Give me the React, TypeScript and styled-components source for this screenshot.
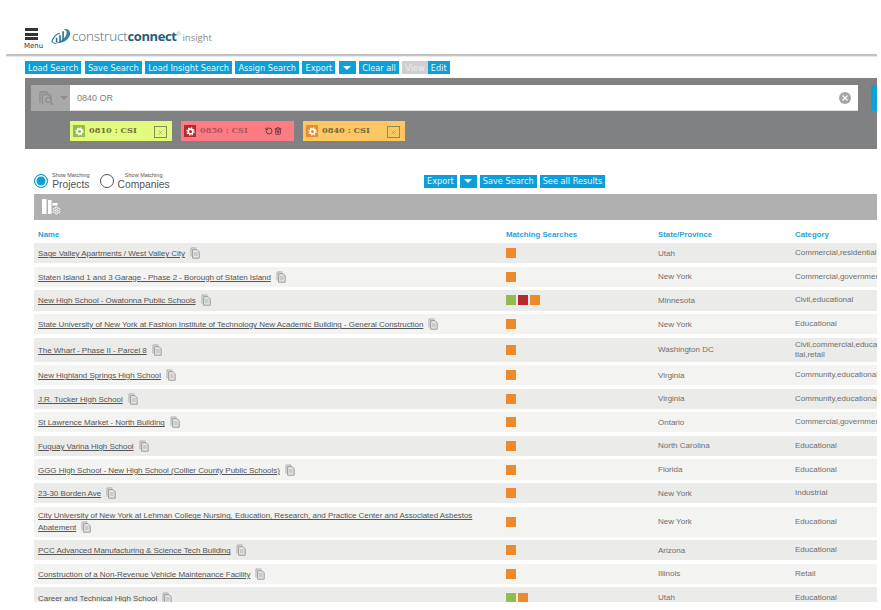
import React from 'react';
import styled, { createGlobalStyle } from 'styled-components';
import { RotateCcw, Settings, Trash2, X } from 'lucide-react';

const GlobalStyle = createGlobalStyle`
  html, body {
    margin: 0;
    padding: 0;
    background: #fff;
    overflow: hidden;
  }
  body {
    font-family: 'Liberation Sans', Arial, sans-serif;
  }
`;

type Project = {
  name: string;
  matches: string[];
  state: string;
  category: string;
};

const orange = '#ee8a2a';
const green = '#93bb4e';
const red = '#b9282f';

const projects: Project[] = [
  { name: 'Sage Valley Apartments / West Valley City', matches: [orange], state: 'Utah', category: 'Commercial,residential' },
  { name: 'Staten Island 1 and 3 Garage - Phase 2 - Borough of Staten Island', matches: [orange], state: 'New York', category: 'Commercial,government' },
  { name: 'New High School - Owatonna Public Schools', matches: [green, red, orange], state: 'Minnesota', category: 'Civil,educational' },
  { name: 'State University of New York at Fashion Institute of Technology New Academic Building - General Construction', matches: [orange], state: 'New York', category: 'Educational' },
  { name: 'The Wharf - Phase II - Parcel 8', matches: [orange], state: 'Washington DC', category: 'Civil,commercial,educational,residential,retail' },
  { name: 'New Highland Springs High School', matches: [orange], state: 'Virginia', category: 'Community,educational' },
  { name: 'J.R. Tucker High School', matches: [orange], state: 'Virginia', category: 'Community,educational' },
  { name: 'St Lawrence Market - North Building', matches: [orange], state: 'Ontario', category: 'Commercial,government' },
  { name: 'Fuquay Varina High School', matches: [orange], state: 'North Carolina', category: 'Educational' },
  { name: 'GGG High School - New High School (Collier County Public Schools)', matches: [orange], state: 'Florida', category: 'Educational' },
  { name: '23-30 Borden Ave', matches: [orange], state: 'New York', category: 'Industrial' },
  { name: 'City University of New York at Lehman College Nursing, Education, Research, and Practice Center and Associated Asbestos Abatement', matches: [orange], state: 'New York', category: 'Educational' },
  { name: 'PCC Advanced Manufacturing & Science Tech Building', matches: [orange], state: 'Arizona', category: 'Educational' },
  { name: 'Construction of a Non-Revenue Vehicle Maintenance Facility', matches: [orange], state: 'Illinois', category: 'Retail' },
  { name: 'Career and Technical High School', matches: [green, orange], state: 'Utah', category: 'Educational' },
];

const CopyIcon = () => (
  <CopyGlyph viewBox="0 0 10 12" aria-hidden="true">
    <path d="M1 9.5V1h5.5" fill="none" stroke="#a9a9a9" strokeWidth="1" />
    <path d="M2.6 2.6h4.4l2.2 2.2v6.4H2.6z" fill="#e2e2e2" stroke="#9d9d9d" strokeWidth="1" />
    <path d="M4 6h3.6M4 8h3.6" stroke="#a9a9a9" strokeWidth="0.8" />
  </CopyGlyph>
);

const Logo = () => (
  <svg width="20" height="17" viewBox="0 0 23 19" aria-hidden="true">
    <path d="M1 16C2 10 7 6 10 6" fill="none" stroke="#2d7ea6" strokeWidth="1.4" />
    <path d="M14 1c5-1 8 1 8 5 0 6-8 12-17 11 6-1 12-6 13-11 .4-2.500-1-4-4-5z" fill="#2c86ad" />
    <path d="M1 15c1 3 4 3.500 8 2.400-3 .1-5.500-.4-8-2.400z" fill="#1f6f94" />
    <path d="M5.500 11h1.800v5H5.500zM9.500 8h1.800v8H9.500zM13 3.500h1.800V14H13z" fill="#2c6f8f" />
  </svg>
);

const ChipGear = () => (
  <svg width="9" height="9" viewBox="0 0 10 10" aria-hidden="true">
    <circle cx="5" cy="5" r="2.600" fill="none" stroke="#fff" strokeWidth="1.800" />
    <circle cx="5" cy="5" r="4" fill="none" stroke="#fff" strokeWidth="1.400" strokeDasharray="1.570 1.570" />
  </svg>
);

const App = () => {
  return (
    <Page>
      <GlobalStyle />
      <Header>
        <MenuBlock>
          <MenuBars>
            <span />
            <span />
            <span />
          </MenuBars>
          <MenuLabel>Menu</MenuLabel>
        </MenuBlock>
        <Brand>
          <Logo />
          <BrandName>
            construct<strong>connect</strong>
            <sup>®</sup>
            <em>insight</em>
          </BrandName>
        </Brand>
      </Header>
      <Divider />

      <Toolbar>
        <Button>Load Search</Button>
        <Button>Save Search</Button>
        <Button>Load Insight Search</Button>
        <Button>Assign Search</Button>
        <Button>Export</Button>
        <CaretButton />
        <Button>Clear all</Button>
        <ViewEdit>
          <Button $muted>View</Button>
          <Button>Edit</Button>
        </ViewEdit>
      </Toolbar>

      <SearchPanel>
        <SearchRow>
          <SearchType>
            <svg width="17" height="17" viewBox="0 0 17 17" aria-hidden="true">
              <path d="M2 13V2h7v2" fill="none" stroke="#8e8e8e" strokeWidth="1.400" />
              <path d="M4.500 14.500V4.500h7l1.500 2v3" fill="none" stroke="#8e8e8e" strokeWidth="1.400" />
              <circle cx="10.500" cy="10" r="2.600" fill="none" stroke="#8e8e8e" strokeWidth="1.400" />
              <path d="M12.500 12l2.500 3" stroke="#8e8e8e" strokeWidth="1.600" />
            </svg>
            <DownTriangle $color="#8e8e8e" />
          </SearchType>
          <SearchField>
            <span>0840 OR</span>
            <ClearCircle>
              <X size={8} color="#fff" strokeWidth={4} />
            </ClearCircle>
          </SearchField>
          <SearchGo />
        </SearchRow>
        <Chips>
          <Chip $bg="#e2fb7c" $width={102}>
            <ChipBadge $bg={green}>
              <ChipGear />
            </ChipBadge>
            <ChipLabel $color="#6d7044">0810 : CSI</ChipLabel>
            <ChipClose>
              <X size={7} color="#777" strokeWidth={1.500} />
            </ChipClose>
          </Chip>
          <Chip $bg="#fd7b83" $width={113}>
            <ChipBadge $bg={red}>
              <ChipGear />
            </ChipBadge>
            <ChipLabel $color="#a9565b">0850 : CSI</ChipLabel>
            <ChipActions>
              <RotateCcw size={8} color="#6e3a3d" strokeWidth={3} />
              <Trash2 size={8} color="#6e3a3d" strokeWidth={3} />
            </ChipActions>
          </Chip>
          <Chip $bg="#fdc764" $width={102}>
            <ChipBadge $bg={orange}>
              <ChipGear />
            </ChipBadge>
            <ChipLabel $color="#77653a">0840 : CSI</ChipLabel>
            <ChipClose>
              <X size={7} color="#777" strokeWidth={1.500} />
            </ChipClose>
          </Chip>
        </Chips>
      </SearchPanel>

      <ResultsControls>
        <RadioGroup>
          <RadioOption>
            <Radio $checked />
            <RadioText>
              <small>Show Matching</small>
              <span>Projects</span>
            </RadioText>
          </RadioOption>
          <RadioOption>
            <Radio />
            <RadioText>
              <small>Show Matching</small>
              <span>Companies</span>
            </RadioText>
          </RadioOption>
        </RadioGroup>
        <ResultActions>
          <Button>Export</Button>
          <CaretButton />
          <Button>Save Search</Button>
          <Button>See all Results</Button>
        </ResultActions>
      </ResultsControls>

      <Results>
        <ColumnBar>
          <svg width="20" height="18" viewBox="0 0 20 18" aria-hidden="true">
            <path d="M0 1h4.500v15H0zM6 2h3.500v14H6zM10.500 5h5v2.500h-5z" fill="#fff" />
          </svg>
          <ColumnGear>
            <Settings size={9} color="#fff" strokeWidth={2.500} />
          </ColumnGear>
        </ColumnBar>
        <HeadRow>
          <span>Name</span>
          <span>Matching Searches</span>
          <span>State/Province</span>
          <span>Category</span>
        </HeadRow>
        <Rows>
          {projects.map((project, i) => (
            <Row key={project.name} $odd={i % 2 === 0}>
              <NameCell>
                <a href="#">{project.name}</a>
                <CopyIcon />
              </NameCell>
              <Swatches>
                {project.matches.map((color, j) => (
                  <Swatch key={j} $color={color} />
                ))}
              </Swatches>
              <TextCell>{project.state}</TextCell>
              <CategoryCell>{project.category}</CategoryCell>
            </Row>
          ))}
        </Rows>
      </Results>
    </Page>
  );
};

export default App;

const Page = styled.div`
  width: 877px;
  height: 602px;
  overflow: hidden;
  background: #fff;
`;

const Header = styled.header`
  display: flex;
  align-items: flex-end;
  gap: 8px;
  height: 54px;
  padding-left: 24px;
  box-sizing: border-box;
`;

const MenuBlock = styled.div`
  display: flex;
  flex-direction: column;
  align-items: flex-start;
  width: 19px;
  margin-bottom: 3px;
`;

const MenuBars = styled.div`
  display: flex;
  flex-direction: column;
  gap: 1.500px;
  width: 13px;
  margin-left: 1px;

  & span {
    display: block;
    height: 3px;
    background: #333;
  }
`;

const MenuLabel = styled.span`
  margin-top: 2px;
  font-family: 'DejaVu Sans', sans-serif;
  font-size: 7px;
  line-height: 9px;
  color: #333;
`;

const Brand = styled.div`
  display: flex;
  align-items: center;
  gap: 1px;
  margin-bottom: 9px;
`;

const BrandName = styled.div`
  font-family: 'Open Sans', sans-serif;
  font-size: 13.500px;
  font-weight: 300;
  color: #4d6b7c;
  letter-spacing: -0.2px;
  white-space: nowrap;

  & strong {
    font-size: 13px;
    font-weight: 700;
    letter-spacing: -0.4px;
    color: #2c5b75;
  }

  & sup {
    font-size: 5px;
    color: #666;
  }

  & em {
    margin-left: 2px;
    font-size: 9.500px;
    font-style: normal;
    font-weight: 400;
    letter-spacing: 0;
    color: #8a8a8a;
  }
`;

const Divider = styled.div`
  height: 2px;
  margin-left: 6px;
  background: #c4c4c4;
  box-shadow: 0 1px 1px #e8e8e8;
`;

const Toolbar = styled.div`
  display: flex;
  gap: 3.500px;
  margin: 5px 0 4px 25px;
  height: 13px;
`;

const Button = styled.button<{ $muted?: boolean }>`
  display: flex;
  align-items: center;
  justify-content: center;
  height: 13px;
  padding: 0 3px;
  border: 0;
  border-radius: 0;
  background: ${(p) => (p.$muted ? '#cfcfcf' : '#0d9fd8')};
  color: ${(p) => (p.$muted ? '#eee' : '#e6f6fc')};
  font-family: 'DejaVu Sans', sans-serif;
  font-size: 8.200px;
  white-space: nowrap;
`;

const CaretBox = styled(Button)`
  width: 17px;
  padding: 0;
`;

const DownTriangle = styled.i<{ $color: string }>`
  display: block;
  width: 0;
  height: 0;
  border-left: 4px solid transparent;
  border-right: 4px solid transparent;
  border-top: 4px solid ${(p) => p.$color};
`;

const CaretButton = () => (
  <CaretBox aria-label="More">
    <DownTriangle $color="#fff" />
  </CaretBox>
);

const ViewEdit = styled.div`
  display: flex;
  gap: 0;
`;

const SearchPanel = styled.section`
  display: flex;
  flex-direction: column;
  height: 71px;
  margin-left: 25px;
  padding: 7px 0 0 6px;
  box-sizing: border-box;
  background: #7f8182;
`;

const SearchRow = styled.div`
  display: flex;
  height: 26px;
`;

const SearchType = styled.div`
  display: flex;
  align-items: center;
  gap: 5px;
  width: 39px;
  padding-left: 7px;
  box-sizing: border-box;
  background: #a9a9a9;
`;

const SearchField = styled.div`
  display: flex;
  align-items: center;
  justify-content: space-between;
  width: 790px;
  padding: 0 7px 0 7px;
  box-sizing: border-box;
  background: #fff;
  border-bottom: 1px solid #ddd;
  font-size: 9px;
  color: #808080;
`;

const ClearCircle = styled.span`
  display: flex;
  align-items: center;
  justify-content: center;
  width: 12px;
  height: 12px;
  border-radius: 50%;
  background: #a5a5a5;
`;

const SearchGo = styled.div`
  width: 6px;
  margin-left: 13px;
  background: #0d9fd8;
`;

const Chips = styled.div`
  display: flex;
  gap: 9px;
  margin: 10px 0 0 39px;
`;

const Chip = styled.div<{ $bg: string; $width: number }>`
  display: flex;
  align-items: center;
  width: ${(p) => p.$width}px;
  height: 20px;
  padding: 0 5px 0 3px;
  box-sizing: border-box;
  background: ${(p) => p.$bg};
`;

const ChipBadge = styled.span<{ $bg: string }>`
  display: flex;
  align-items: center;
  justify-content: center;
  flex: none;
  width: 12px;
  height: 12px;
  background: ${(p) => p.$bg};
`;

const ChipLabel = styled.span<{ $color: string }>`
  margin: -2px 0 0 4px;
  font-family: 'DejaVu Serif', serif;
  font-size: 8.200px;
  font-weight: 700;
  color: ${(p) => p.$color};
  white-space: nowrap;
`;

const ChipClose = styled.span`
  display: flex;
  align-items: center;
  justify-content: center;
  width: 11px;
  height: 10px;
  margin-left: auto;
  margin-top: 2px;
  border: 1px solid #8a8a60;
  box-sizing: content-box;
`;

const ChipActions = styled.span`
  display: flex;
  gap: 1px;
  margin-left: auto;
  margin-right: 7px;
`;

const ResultsControls = styled.div`
  display: flex;
  align-items: center;
  height: 42px;
  margin-left: 34px;
  padding-top: 22px;
  box-sizing: border-box;
`;

const RadioGroup = styled.div`
  display: flex;
  gap: 10px;
  width: 390px;
`;

const RadioOption = styled.label`
  display: flex;
  align-items: center;
  gap: 4px;
`;

const Radio = styled.span<{ $checked?: boolean }>`
  display: block;
  width: 12px;
  height: 12px;
  border-radius: 50%;
  border: 1px solid ${(p) => (p.$checked ? '#0d9fd8' : '#555')};
  background: ${(p) => (p.$checked ? '#0d9fd8' : '#fff')};
  box-shadow: ${(p) => (p.$checked ? 'inset 0 0 0 1.500px #fff' : 'none')};
`;

const RadioText = styled.span`
  display: flex;
  flex-direction: column;
  align-items: center;
  color: #555;

  & small {
    font-size: 5.500px;
    line-height: 7px;
  }

  & span {
    font-size: 10.300px;
    line-height: 12px;
  }
`;

const ResultActions = styled.div`
  display: flex;
  gap: 3px;
`;

const Results = styled.section`
  margin: 3px 0 0 34px;
`;

const ColumnBar = styled.div`
  display: flex;
  align-items: center;
  position: relative;
  height: 26px;
  padding-left: 8px;
  background: #b0b0b0;
  box-sizing: border-box;
`;

const ColumnGear = styled.span`
  position: absolute;
  left: 18px;
  top: 12px;
  display: flex;
`;

const tableColumns = '472px 152px 137px 132px';

const HeadRow = styled.div`
  display: grid;
  grid-template-columns: ${tableColumns};
  align-items: center;
  height: 23px;
  padding-top: 5px;
  box-sizing: border-box;
  font-size: 7.800px;
  font-weight: 700;
  color: #29a3d6;

  & span:first-child {
    padding-left: 4px;
  }
`;

const Rows = styled.div`
  display: flex;
  flex-direction: column;
  gap: 3.350px;
`;

const Row = styled.div<{ $odd: boolean }>`
  display: grid;
  grid-template-columns: ${tableColumns};
  align-items: center;
  min-height: 20.300px;
  background: ${(p) => (p.$odd ? '#ebebea' : '#f3f3f2')};
  font-size: 8px;
  color: #6f6f6f;
`;

const NameCell = styled.div`
  padding: 3.500px 30px 3.500px 4px;
  line-height: 11px;
  letter-spacing: -0.05px;
  color: #555;

  & a {
    color: #555;
    text-decoration: underline;
  }
`;

const CopyGlyph = styled.svg`
  display: inline-block;
  width: 10px;
  height: 12px;
  margin-left: 5px;
  vertical-align: -3px;
`;

const Swatches = styled.div`
  display: flex;
  gap: 2px;
`;

const Swatch = styled.span<{ $color: string }>`
  display: block;
  width: 10px;
  height: 10px;
  background: ${(p) => p.$color};
`;

const TextCell = styled.div``;

const CategoryCell = styled.div`
  padding: 2px 0;
  line-height: 10px;
  word-break: break-all;
`;
